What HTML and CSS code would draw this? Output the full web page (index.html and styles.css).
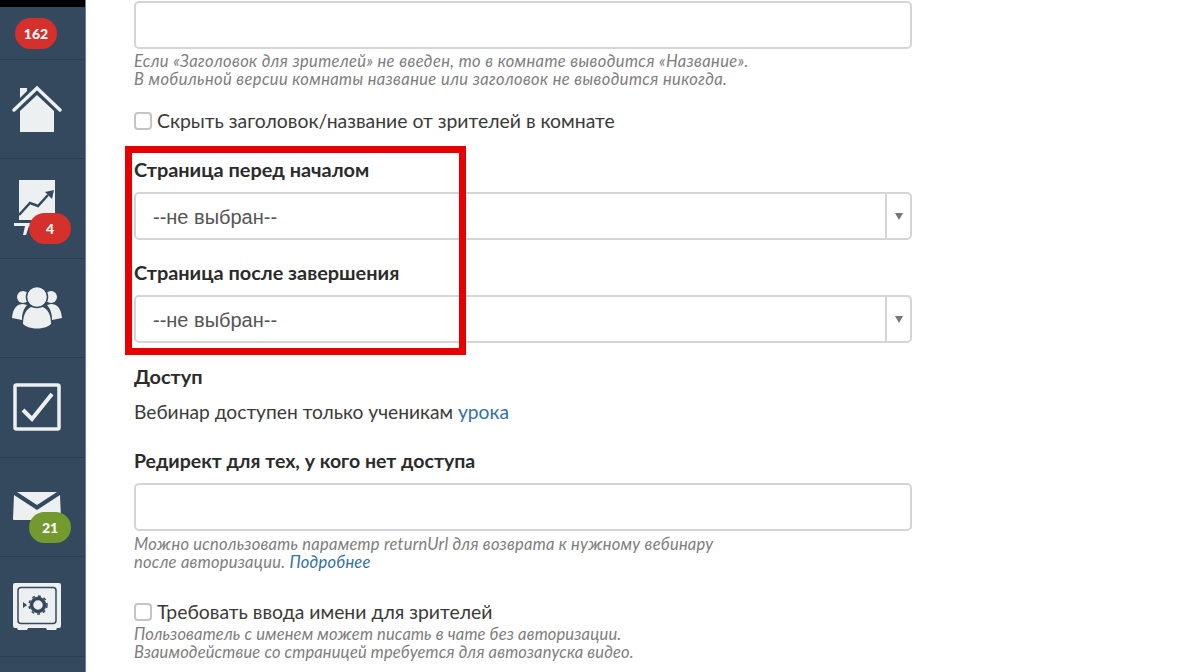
FILE: index.html
```html
<!DOCTYPE html>
<html lang="ru">
<head>
<meta charset="utf-8">
<title>Настройки вебинара</title>
<link rel="stylesheet" href="styles.css">
</head>
<body>
<div class="page">
  <nav class="side">
    <div class="top-black"></div>
    <div class="nav-item nav-first"><span class="badge badge-red badge-top">162</span></div>
    <div class="nav-item">
      <svg class="icon" viewBox="0 0 50 50" width="50" height="50"><path fill="#ecf0f1" d="M8 27 25 11 42 27V48H8Z"/><path fill="none" stroke="#ecf0f1" stroke-width="3.400" stroke-linecap="round" d="M2 26 25 4 48 26"/><path fill="#ecf0f1" d="M8 4h7v3l-7 7Z"/></svg>
    </div>
    <div class="nav-item">
      <svg class="icon" viewBox="0 0 50 60" width="50" height="60"><path fill="#ecf0f1" d="M7 2H43V42H7Z"/><path fill="none" stroke="#34495e" stroke-width="2.500" d="M7 37 18 25 26 28 36 17"/><path fill="#34495e" d="M33 14 42 12 40 21Z"/><path fill="#ecf0f1" d="M2 45H30V48H17L14 57H11L13 48H2Z"/></svg>
      <span class="badge badge-red badge-side">4</span>
    </div>
    <div class="nav-item">
      <svg class="icon" viewBox="0 0 50 44" width="50" height="44"><g fill="#ecf0f1"><circle cx="11" cy="11" r="6"/><circle cx="39" cy="11" r="6"/><path d="M0 32C1 22 5 18 11 18L15 19C11 24 10 28 10 34Z"/><path d="M50 32C49 22 45 18 39 18L35 19C39 24 40 28 40 34Z"/><path d="M11 38C11 28 15 22 20 21H30C35 22 39 28 39 38 33 44 17 44 11 38Z"/></g><circle cx="25" cy="11" r="10.500" fill="#ecf0f1" stroke="#34495e" stroke-width="1.500"/></svg>
    </div>
    <div class="nav-item">
      <svg class="icon" viewBox="0 0 48 48" width="48" height="48"><rect x="2" y="2" width="44" height="44" rx="1.500" fill="none" stroke="#ecf0f1" stroke-width="3.500"/><path fill="none" stroke="#ecf0f1" stroke-width="4" d="M10 27 19 36 39 11"/></svg>
    </div>
    <div class="nav-item">
      <svg class="icon" viewBox="0 0 48 30" width="48" height="30"><path fill="#ecf0f1" d="M1 3 24 18 47 3 48 27Q48 28 47 28H1Q0 28 0 27Z"/><path fill="#ecf0f1" d="M4 0H44L24 13Z"/></svg>
      <span class="badge badge-green badge-side">21</span>
    </div>
    <div class="nav-item">
      <svg class="icon" viewBox="0 0 48 48" width="48" height="48"><path fill="#ecf0f1" d="M2 1H46Q48 1 48 3V44Q48 46 46 46H44L43 48H34L33 46H15L14 48H5L4 46H2Q0 46 0 44V3Q0 1 2 1Z"/><rect x="5" y="5.500" width="38" height="36" rx="3" fill="none" stroke="#34495e" stroke-width="1.500"/><circle cx="25" cy="23" r="6.500" fill="none" stroke="#34495e" stroke-width="3.500"/><circle cx="25" cy="23" r="9" fill="none" stroke="#34495e" stroke-width="1.500" stroke-dasharray="3 3"/><path fill="#34495e" d="M10 20 14 23 10 26Z"/></svg>
    </div>
    <div class="nav-item nav-last"></div>
  </nav>

  <main class="content">
    <div class="input input-top"></div>
    <p class="hint hint-top">Если «Заголовок для зрителей» не введен, то в комнате выводится «Название».<br>В мобильной версии комнаты название или заголовок не выводится никогда.</p>

    <label class="check check-first"><span class="box"></span>Скрыть заголовок/название от зрителей в комнате</label>

    <div class="field field-before">
      <div class="label">Страница перед началом</div>
      <div class="select"><span class="select-value">--не выбран--</span><span class="select-arrow"><span class="tri"></span></span></div>
    </div>
    <div class="field field-after">
      <div class="label">Страница после завершения</div>
      <div class="select"><span class="select-value">--не выбран--</span><span class="select-arrow"><span class="tri"></span></span></div>
    </div>

    <div class="label label-access">Доступ</div>
    <p class="plain">Вебинар доступен только ученикам <a class="link" href="#">урока</a></p>

    <div class="label label-redirect">Редирект для тех, у кого нет доступа</div>
    <div class="input"></div>
    <p class="hint hint-redirect">Можно использовать параметр returnUrl для возврата к нужному вебинару<br>после авторизации. <a class="link" href="#">Подробнее</a></p>

    <label class="check check-name"><span class="box"></span>Требовать ввода имени для зрителей</label>
    <p class="hint hint-name">Пользователь с именем может писать в чате без авторизации.<br>Взаимодействие со страницей требуется для автозапуска видео.</p>

    <div class="highlight"></div>
  </main>
</div>
</body>
</html>
```
FILE: styles.css
```css
* { box-sizing: border-box; }
html, body { margin: 0; height: 100%; overflow: hidden; background: #fff; }
body { font-family: "Lato", "Open Sans", sans-serif; color: #333; }
.page { display: flex; width: 1200px; height: 672px; overflow: hidden; }

.side { width: 86px; flex: none; height: 672px; background: #34495e; border-right: 1px solid #6c8199; overflow: hidden; }
.top-black { height: 7px; background: #000; }
.nav-item { position: relative; height: 99.500px; display: flex; align-items: center; justify-content: center; padding-right: 12px; border-bottom: 1px solid #2b3d50; }
.nav-first { height: 52.500px; }
.nav-item .icon { display: block; }
.badge { position: absolute; display: flex; align-items: center; justify-content: center; width: 42px; height: 31px; border-radius: 15.500px; color: #fff; font-size: 14px; font-weight: 900; }
.badge-red { background: #d5302b; }
.badge-green { background: #74992e; }
.badge-top { left: 15px; top: 11px; }
.badge-side { left: 29px; top: 54px; }

.content { position: relative; flex: none; width: 1114px; padding: 1px 0 0 48px; }
.input { width: 778px; height: 48px; border: 2px solid #d5d5d5; border-radius: 5px; background: #fff; }
.hint { margin: 0; width: 778px; font-size: 16.500px; line-height: 18px; font-style: italic; color: #7d7d7d; }
.hint-top { margin-top: 3px; letter-spacing: 0.380px; }
.check { display: flex; align-items: center; font-size: 19.400px; line-height: 24px; color: #3a3a3a; }
.box { width: 18px; height: 18px; margin-right: 5px; border: 2px solid #c4c4c4; border-radius: 4px; background: #fff; }
.check-first { margin-top: 21px; }
.label { font-size: 19.900px; line-height: 24px; font-weight: 700; color: #2b2b2b; }
.field-before { margin-top: 24px; }
.field-after { margin-top: 20px; }
.select { display: flex; width: 778px; height: 48px; margin-top: 11px; border: 2px solid #d5d5d5; border-radius: 5px; background: #fff; }
.select-value { flex: 1; padding-left: 17px; font-family: "Liberation Sans", Arial, sans-serif; font-size: 20px; line-height: 46px; color: #555; }
.select-arrow { display: flex; align-items: center; justify-content: center; width: 25px; border-left: 2px solid #d5d5d5; }
.tri { width: 0; height: 0; border-style: solid; border-width: 7px 4.500px 0; border-color: #777 transparent transparent; }
.label-access { margin-top: 21px; }
.plain { margin: 12px 0 0; font-size: 19.200px; line-height: 24px; color: #3a3a3a; }
.link { color: #34709f; text-decoration: none; }
.label-redirect { margin-top: 25px; margin-bottom: 10px; font-size: 19.500px; }
.hint-redirect { margin-top: 4px; letter-spacing: 0.250px; }
.check-name { margin-top: 29px; }
.hint-name { margin-top: 1px; letter-spacing: 0.150px; }
.highlight { position: absolute; left: 39px; top: 146px; width: 341px; height: 209px; border: 7px solid #e60000; pointer-events: none; }
```
